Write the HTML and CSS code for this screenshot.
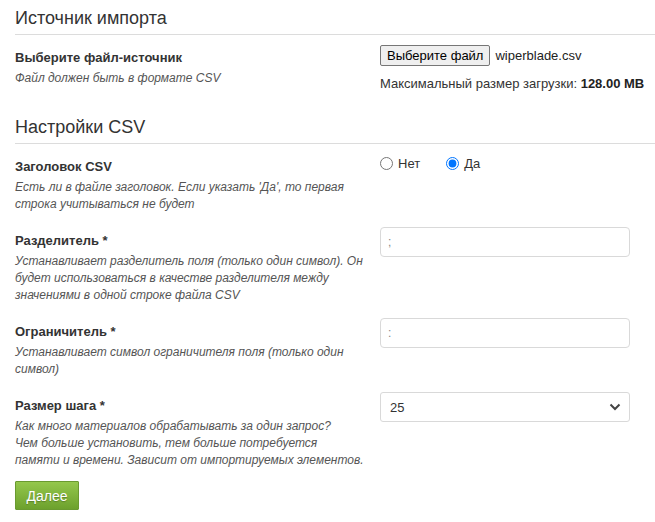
FILE: index.html
```html
<!DOCTYPE html>
<html lang="ru">
<head>
<meta charset="utf-8">
<title>Импорт CSV</title>
<link rel="stylesheet" href="styles.css">
</head>
<body>
<div class="page">
  <h2 class="section-title first">Источник импорта</h2>
  <div class="row row-file">
    <div class="info">
      <div class="label">Выберите файл-источник</div>
      <div class="desc">Файл должен быть в формате CSV</div>
    </div>
    <div class="control">
      <div class="file-line"><button class="file-btn" type="button">Выберите файл</button><span class="file-name">wiperblade.csv</span></div>
      <div class="max-size">Максимальный размер загрузки: <b>128.00 MB</b></div>
    </div>
  </div>

  <h2 class="section-title second">Настройки CSV</h2>
  <div class="row">
    <div class="info">
      <div class="label">Заголовок CSV</div>
      <div class="desc">Есть ли в файле заголовок. Если указать 'Да', то первая строка учитываться не будет</div>
    </div>
    <div class="control radios">
      <label class="radio"><input type="radio" name="hdr"> Нет</label>
      <label class="radio"><input type="radio" name="hdr" checked> Да</label>
    </div>
  </div>

  <div class="row">
    <div class="info">
      <div class="label">Разделитель *</div>
      <div class="desc">Устанавливает разделитель поля (только один символ). Он будет использоваться в качестве разделителя между значениями в одной строке файла CSV</div>
    </div>
    <div class="control">
      <input class="text-input" type="text" value=";">
    </div>
  </div>

  <div class="row">
    <div class="info">
      <div class="label">Ограничитель *</div>
      <div class="desc">Устанавливает символ ограничителя поля (только один символ)</div>
    </div>
    <div class="control">
      <input class="text-input" type="text" value=":">
    </div>
  </div>

  <div class="row">
    <div class="info">
      <div class="label">Размер шага *</div>
      <div class="desc">Как много материалов обрабатывать за один запрос?<br>Чем больше установить, тем больше потребуется<br>памяти и времени. Зависит от импортируемых элементов.</div>
    </div>
    <div class="control">
      <div class="select-wrap">
        <select class="select"><option>25</option><option>50</option><option>100</option></select>
        <svg class="chev" width="12" height="8" viewBox="0 0 12 8"><path d="M1.5 1.5 L6 6 L10.5 1.5" fill="none" stroke="#444" stroke-width="2"/></svg>
      </div>
    </div>
  </div>

  <button class="next-btn" type="button">Далее</button>
</div>
</body>
</html>
```
FILE: styles.css
```css
* { box-sizing: border-box; }
html, body { margin: 0; padding: 0; background: #fff; }
body {
  font-family: "Liberation Sans", Arial, sans-serif;
  color: #333;
  font-size: 13px;
}
.page {
  padding: 7px 0 0 15px;
  overflow: hidden;
}
.section-title {
  font-size: 18px;
  font-weight: normal;
  line-height: 22px;
  margin: 0;
  padding-bottom: 5px;
  border-bottom: 1px solid #dcdcdc;
  color: #333;
}
.section-title.second { margin-top: 25px; }
.row {
  display: flex;
  align-items: flex-start;
  margin-top: 14px;
}
.section-title + .row { margin-top: 9px; }
.section-title + .row-file { margin-top: 10px; }
.row-file .info { padding-top: 4px; }
.info {
  width: 365px;
  flex: none;
  padding-top: 5px;
  padding-right: 10px;
}
.label {
  font-weight: bold;
  font-size: 13px;
  line-height: 17px;
  color: #333;
}
.desc {
  margin-top: 4px;
  font-style: italic;
  font-size: 12px;
  line-height: 17px;
  color: #555;
}
.control { width: 250px; flex: none; }
.file-line { display: flex; align-items: center; height: 21px; white-space: nowrap; }
.file-btn {
  font-family: "Liberation Sans", Arial, sans-serif;
  font-size: 13px;
  color: #000;
  height: 21px;
  padding: 0 6px;
  background: #efefef;
  border: 1px solid #767676;
  border-radius: 2px;
  margin: 0 5px 0 0;
}
.file-name { font-size: 13px; color: #222; }
.max-size { margin-top: 10px; font-size: 13px; color: #333; white-space: nowrap; }
.max-size b { color: #222; }
.radios { display: flex; gap: 26px; padding-top: 3px; }
.radio {
  display: flex;
  align-items: center;
  font-size: 13px;
  color: #333;
  gap: 5px;
}
.radio input { margin: 0; width: 13px; height: 13px; }
.text-input {
  display: block;
  width: 250px;
  height: 30px;
  border: 1px solid #d9d9d9;
  border-radius: 4px;
  padding: 0 7px;
  font-family: "Liberation Sans", Arial, sans-serif;
  font-size: 12px;
  color: #888;
  background: #fff;
}
.select-wrap { position: relative; width: 250px; }
.select {
  display: block;
  width: 250px;
  height: 30px;
  border: 1px solid #d9d9d9;
  border-radius: 3px;
  padding: 0 9px;
  font-family: "Liberation Sans", Arial, sans-serif;
  font-size: 13px;
  color: #333;
  background: #fff;
  appearance: none;
  -webkit-appearance: none;
}
.chev { position: absolute; right: 9px; top: 11px; pointer-events: none; }
.next-btn {
  display: block;
  margin-top: 12px;
  width: 64px;
  height: 29px;
  font-family: "Liberation Sans", Arial, sans-serif;
  font-size: 14px;
  color: #fff;
  text-shadow: 0 1px 1px rgba(0,0,0,0.25);
  background: linear-gradient(#94c74c, #6da12d);
  border: 1px solid #6a9a30;
  border-radius: 1px;
  padding: 0;
}
```
